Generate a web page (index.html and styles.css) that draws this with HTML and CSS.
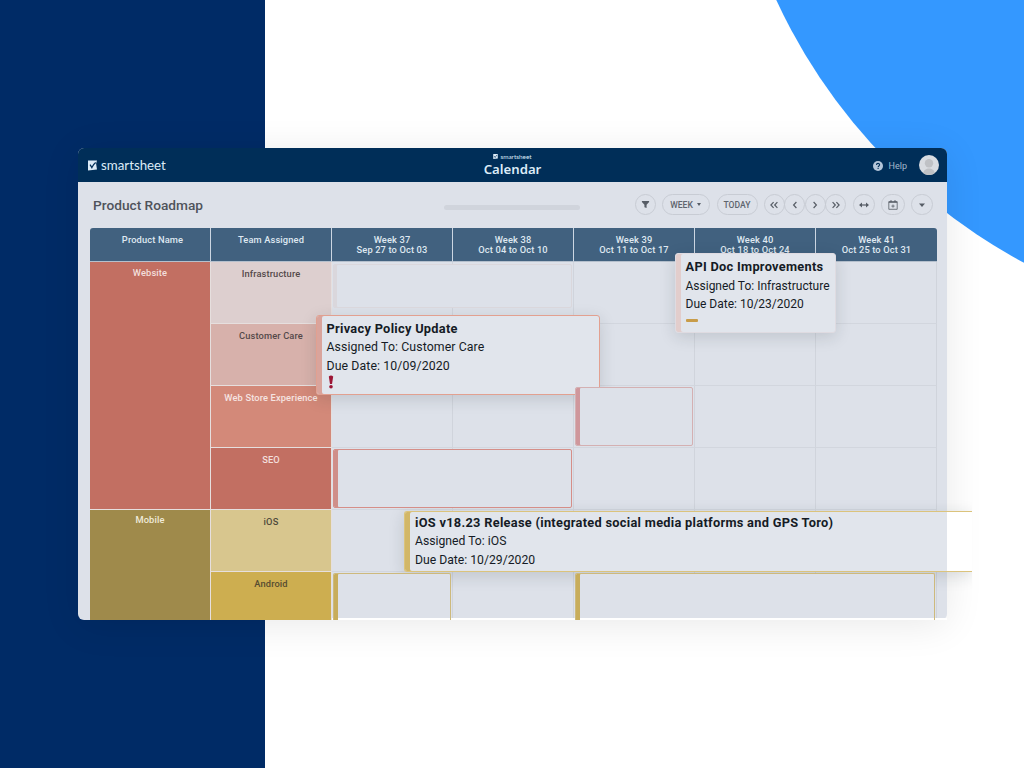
FILE: index.html
```
<!DOCTYPE html>
<html lang="en">
<head>
  <meta charset="UTF-8">
  <meta name="viewport" content="width=device-width, initial-scale=1.0">
  <title>Smartsheet Calendar</title>
  <link rel="stylesheet" href="styles.css">
</head>
<body>
  <div class="stage">
    <div class="circle"></div>

    <div class="window">
      <header class="topbar">
        <div class="brand">
          <svg class="brand-icon" viewBox="0 0 10 11"><path d="M0 0h10L9 3.5 10 10 0 11z" fill="#dcebf7"/><path d="M2.3 4.6l2 3.2C5.3 5.5 6.5 3.8 8.5 2.2" fill="none" stroke="#002e58" stroke-width="1.4"/></svg>
          <span>smartsheet</span>
        </div>
        <div class="app-title">
          <div class="brand-small">
            <svg viewBox="0 0 10 11"><path d="M0 0h10v10L0 11z" fill="#dcebf7"/><path d="M2.3 4.6l2 3.2C5.3 5.5 6.5 3.8 8.5 2.2" fill="none" stroke="#002e58" stroke-width="1.4"/></svg>
            <span>smartsheet</span>
          </div>
          <div class="app-name">Calendar</div>
        </div>
        <div class="account">
          <svg class="help-icon" viewBox="0 0 10 10"><circle cx="5" cy="5" r="5" fill="#b4c6da"/><path d="M3.5 3.9c0-2 3.1-2 3.1-.1C6.6 5 5.1 4.9 5.1 6.2M5.1 7v1.1" fill="none" stroke="#002e58" stroke-width="1.1"/></svg>
          <span class="help">Help</span>
          <svg class="avatar" viewBox="0 0 20 20"><circle cx="10" cy="10" r="10" fill="#d9dce1"/><circle cx="10" cy="8.3" r="4.2" fill="#bfc1c5"/><path d="M4.3 18.2c.6-6.2 10.8-6.2 11.4 0a10 10 0 0 1-11.4 0z" fill="#bfc1c5"/></svg>
        </div>
      </header>

      <div class="toolbar">
        <h1>Product Roadmap</h1>
        <div class="scrollbar"></div>
        <div class="controls">
          <button class="round filter"><svg viewBox="0 0 10 10"><path d="M1 1h8v1.2L6.2 5.2V9L3.8 8V5.2L1 2.2z" fill="#575d66"/></svg></button>
          <button class="pill week">WEEK <i class="caret"></i></button>
          <button class="pill today">TODAY</button>
          <div class="pager">
            <button class="round"><svg viewBox="0 0 10 10"><path d="M4.6 2.200L1.900 5l2.700 2.800M8.400 2.200L5.700 5l2.700 2.800"/></svg></button>
            <button class="round"><svg viewBox="0 0 10 10"><path d="M6.400 2L3.600 5l2.800 3"/></svg></button>
            <button class="round"><svg viewBox="0 0 10 10"><path d="M3.600 2l2.800 3-2.800 3"/></svg></button>
            <button class="round"><svg viewBox="0 0 10 10"><path d="M1.600 2.200L4.300 5 1.600 7.800M5.400 2.200L8.100 5 5.400 7.800"/></svg></button>
          </div>
          <button class="round fit"><svg viewBox="0 0 10 10"><path d="M1 5h8"/><path d="M0 5l3-2.4v4.8zM10 5L7 2.6v4.8z" fill="#575d66" stroke="none"/></svg></button>
          <button class="round add"><svg viewBox="0 0 10 10"><path class="thin" d="M.8 1.700h8.400v7.600H.8zM5 4.500v3.200M3.400 6.100h3.200"/><path d="M.8 2.200h8.400M3 .2v2M7 .2v2"/></svg></button>
          <button class="round more"><svg viewBox="0 0 10 10"><path d="M2 3.5h6L5 7z" fill="#575d66" stroke="none"/></svg></button>
        </div>
      </div>

      <div class="calendar">
        <div class="head">Product Name</div>
        <div class="head">Team Assigned</div>
        <div class="head">Week 37<br>Sep 27 to Oct 03</div>
        <div class="head">Week 38<br>Oct 04 to Oct 10</div>
        <div class="head">Week 39<br>Oct 11 to Oct 17</div>
        <div class="head">Week 40<br>Oct 18 to Oct 24</div>
        <div class="head">Week 41<br>Oct 25 to Oct 31</div>

        <div class="product website">Website</div>
        <div class="team infrastructure">Infrastructure</div>
        <div class="day"></div><div class="day"></div><div class="day"></div><div class="day"></div><div class="day"></div>
        <div class="team care">Customer Care</div>
        <div class="day"></div><div class="day"></div><div class="day"></div><div class="day"></div><div class="day"></div>
        <div class="team store">Web Store Experience</div>
        <div class="day"></div><div class="day"></div><div class="day"></div><div class="day"></div><div class="day"></div>
        <div class="team seo">SEO</div>
        <div class="day"></div><div class="day"></div><div class="day"></div><div class="day"></div><div class="day"></div>

        <div class="product mobile">Mobile</div>
        <div class="team ios">iOS</div>
        <div class="day"></div><div class="day"></div><div class="day"></div><div class="day"></div><div class="day"></div>
        <div class="team android">Android</div>
        <div class="day"></div><div class="day"></div><div class="day"></div><div class="day"></div><div class="day"></div>
      </div>

      <!-- same tracks as the calendar, laid over its cells -->
      <div class="events">
        <div class="event event-infrastructure"></div>
        <div class="event event-store"></div>
        <div class="event event-seo"></div>
        <div class="event event-android"></div>
        <div class="event event-android late"></div>
      </div>
    </div>

    <div class="card card-privacy">
      <h2>Privacy Policy Update</h2>
      <p>Assigned To: Customer Care</p>
      <p>Due Date: 10/09/2020</p>
      <svg class="priority-high" viewBox="0 0 6 14"><path d="M.8 1.5Q3-.5 5.2 1.5L4 9H2z"/><circle cx="3" cy="11.7" r="1.8"/></svg>
    </div>

    <div class="card card-api">
      <h2>API Doc Improvements</h2>
      <p>Assigned To: Infrastructure</p>
      <p>Due Date: 10/23/2020</p>
      <div class="priority-low"></div>
    </div>

    <div class="card card-ios">
      <h2>iOS v18.23 Release (integrated social media platforms and GPS Toro)</h2>
      <p>Assigned To: iOS</p>
      <p>Due Date: 10/29/2020</p>
    </div>
  </div>
</body>
</html>
```
FILE: styles.css
```
* {
  box-sizing: border-box;
}

body {
  margin: 0;
  font-family: Roboto, "Liberation Sans", sans-serif;
}

.stage {
  position: relative;
  width: 1024px;
  height: 768px;
  padding: 148px 0 0 78px;
  overflow: hidden;
  background: linear-gradient(to right, #002b66 265px, #fff 265px);
}

.circle {
  position: absolute;
  left: 724px;
  top: -806px;
  width: 1136px;
  height: 1136px;
  border-radius: 50%;
  background: #3498ff;
}

.window {
  position: relative;
  width: 869px;
  height: 471.5px;
  border-radius: 6px;
  background: #dde1e9;
  box-shadow: 0 5px 38px rgba(0, 0, 0, 0.09);
}

.window::after {
  content: "";
  position: absolute;
  left: 254px;
  right: 0;
  bottom: 0;
  height: 2px;
  background: #fff;
}

/* top bar */
.topbar {
  display: grid;
  grid-template-columns: 1fr auto 1fr;
  align-items: center;
  height: 34px;
  padding: 0 8px 0 10px;
  border-radius: 6px 6px 0 0;
  background: #002e58;
  color: #dcebf7;
}

.brand {
  display: flex;
  align-items: center;
  gap: 4px;
  font-family: Lato, sans-serif;
  font-size: 13.3px;
  line-height: 15px;
}

.brand-icon {
  width: 9px;
  height: 11px;
  margin-top: 1px;
}

.app-title {
  margin-left: -2px;
}

.brand-small {
  display: flex;
  justify-content: center;
  align-items: center;
  gap: 2px;
  height: 8px;
  font-family: Lato, sans-serif;
  font-size: 6.4px;
}

.brand-small svg {
  width: 5px;
  height: 5px;
}

.app-name {
  font-family: "Noto Sans", sans-serif;
  font-size: 13.2px;
  font-weight: 600;
  line-height: 17px;
}

.account {
  display: flex;
  justify-content: flex-end;
  align-items: center;
}

.help-icon {
  width: 10px;
  height: 10px;
  margin: 1px 6px 0 0;
}

.help {
  margin: 1px 12px 0 0;
  color: #a4b8cd;
  font-size: 9px;
}

.avatar {
  width: 20px;
  height: 20px;
}

/* toolbar */
.toolbar {
  display: flex;
  align-items: center;
  height: 46px;
  padding: 0 14px 0 15px;
}

h1 {
  width: 352px;
  margin: 0;
  color: #4f535b;
  font-size: 13.7px;
  font-weight: 500;
}

.scrollbar {
  width: 136px;
  height: 5px;
  margin: 4px 0 0 -1px;
  border-radius: 3px;
  background: #d0d4dc;
}

.controls {
  display: flex;
  align-items: center;
  margin: -1px 0 0 auto;
}

button {
  display: flex;
  justify-content: center;
  align-items: center;
  height: 21px;
  padding: 0;
  border: 1px solid #c8ccd4;
  border-radius: 11px;
  background: none;
  color: #5f656e;
  font-family: inherit;
  font-size: 8.6px;
  font-weight: 500;
}

.round {
  width: 21px;
}

.round svg {
  width: 10px;
  height: 10px;
  fill: none;
  stroke: #575d66;
  stroke-width: 1.2;
}

.filter svg {
  width: 9px;
  height: 9px;
  stroke: none;
}

.add svg .thin {
  stroke-width: 0.8;
}

.week {
  width: 48px;
  margin: 0 7px 0 6px;
}

.today {
  width: 41px;
}

.caret {
  margin-left: 4px;
  border: 2px solid transparent;
  border-top: 3px solid #575d66;
  border-bottom: 0;
}

.pager {
  display: flex;
  margin: 0 7px 0 6px;
}

.pager .round + .round {
  margin-left: -0.5px;
}

.fit {
  width: 22px;
}

.add {
  width: 24px;
  margin: 0 6px;
}

.more {
  width: 22px;
}

/* calendar */
.calendar,
.events {
  display: grid;
  grid-template-columns: repeat(7, 121px);
  grid-template-rows: 34px repeat(5, 62px) 47.5px;
}

.calendar {
  margin-left: 12px;
  width: 847px;
}

.head {
  padding-top: 7px;
  border-right: 1px solid #ccd6e2;
  border-bottom: 1px solid #b5c0cd;
  background: #41617f;
  color: #dfe8f1;
  font-size: 9.3px;
  font-weight: 500;
  line-height: 10px;
  letter-spacing: 0.13px;
  text-align: center;
  white-space: nowrap;
}

.head:first-child {
  padding-left: 5px;
  border-radius: 3px 0 0 0;
}

.head:nth-child(7) {
  border-right: 0;
  border-radius: 0 3px 0 0;
}

.product,
.team {
  border-right: 1px solid #e6dfde;
  border-bottom: 1px solid #e6dfde;
  font-size: 9.3px;
  font-weight: 500;
  line-height: 11px;
  letter-spacing: 0.13px;
  text-align: center;
  white-space: nowrap;
}

.product {
  padding-top: 5px;
  color: #f3dfdc;
}

.team {
  padding-top: 6px;
  color: #54494a;
}

.day {
  border-right: 1px solid #d0d4dc;
  border-bottom: 1px solid #d2d6de;
}

.website {
  grid-row: span 4;
  background: #c26f62;
}

.mobile {
  grid-row: span 2;
  padding-top: 4px;
  border-bottom: 0;
  background: #9f8a4b;
  color: #f0ead9;
}

.infrastructure {
  background: #ddcfcf;
}

.care {
  background: #d7b1ab;
}

.store {
  background: #d38979;
  color: #f6e4e1;
}

.seo {
  background: #c26f62;
  color: #f3dfdc;
}

.ios {
  background: #d8c68e;
  color: #4f4a3c;
}

.android {
  border-bottom: 0;
  background: #cdae50;
  color: #564c31;
}

.events {
  position: absolute;
  left: 12px;
  top: 80px;
  z-index: 1;
}

.event {
  margin: 1px 2px 2px 1px;
  border: 1px solid #d58e88;
  border-radius: 2px;
  background: #dde1e9;
  box-shadow: inset 4px 0 #cf8f8a;
}

.event-infrastructure {
  grid-area: 2 / 3 / 3 / 5;
  margin-top: 2px;
  margin-bottom: 16px;
  border-color: #dad7dc;
  box-shadow: inset 3px 0 #dad7dc;
}

.event-store {
  grid-area: 4 / 5;
  border-color: #d4b0b2;
  box-shadow: inset 4px 0 #cf979c;
}

.event-seo {
  grid-area: 5 / 3 / 6 / 5;
}

.event-android {
  grid-area: 7 / 3;
  margin: 1px 2px 0 1px;
  border-color: #cdb97c;
  border-bottom: 0;
  border-radius: 2px 2px 0 0;
  background: linear-gradient(#dde1e9, #dde1e9) top / 100% 44px no-repeat;
  box-shadow: inset 4px 0 #c8ad5b;
}

.late {
  grid-area: 7 / 5 / 8 / 8;
}

/* task cards */
.card {
  position: absolute;
  border: 1px solid #e2a090;
  border-radius: 3px;
  background: #e1e5ec;
  box-shadow: inset 5px 0 #d9a49c, 0 4px 16px rgba(30, 40, 50, 0.15);
  color: #151b25;
  white-space: nowrap;
}

.card h2,
.card p {
  margin: 0;
  font-size: 12.3px;
  line-height: 18.7px;
}

.card h2 {
  font-size: 12.8px;
  letter-spacing: 0.29px;
}

.card p {
  letter-spacing: 0.1px;
}

.card-privacy {
  left: 316px;
  top: 315px;
  width: 284px;
  height: 80px;
  padding: 3.5px 0 0 9.5px;
}

.card-api {
  left: 675px;
  top: 253px;
  width: 161px;
  height: 80px;
  padding: 4px 0 0 9.5px;
  border-color: #dfdbe1;
  box-shadow: inset 5px 0 #e2cdcc, 0 4px 16px rgba(30, 40, 50, 0.15);
}

.card-api p {
  font-size: 12px;
  letter-spacing: 0;
}

.card-ios {
  left: 404px;
  top: 511px;
  width: 568px;
  height: 61px;
  padding: 1.5px 0 0 10px;
  border-color: #dbc37c;
  border-right: 0;
  border-radius: 3px 0 0 3px;
  background: linear-gradient(to right, #e1e5ec 542px, #fff 542px);
  box-shadow: inset 5px 0 #d2b768, 0 4px 16px rgba(30, 40, 50, 0.15);
  clip-path: inset(-40px 0 -40px -40px);
}

.card-ios p {
  font-size: 12.2px;
  letter-spacing: 0;
}

.priority-high {
  display: block;
  width: 6px;
  height: 14px;
  margin: -1px 0 0 1px;
  fill: #9c1535;
}

.priority-low {
  width: 12px;
  height: 3px;
  margin-top: 5px;
  border-radius: 1px;
  background: #c89c49;
}
```
